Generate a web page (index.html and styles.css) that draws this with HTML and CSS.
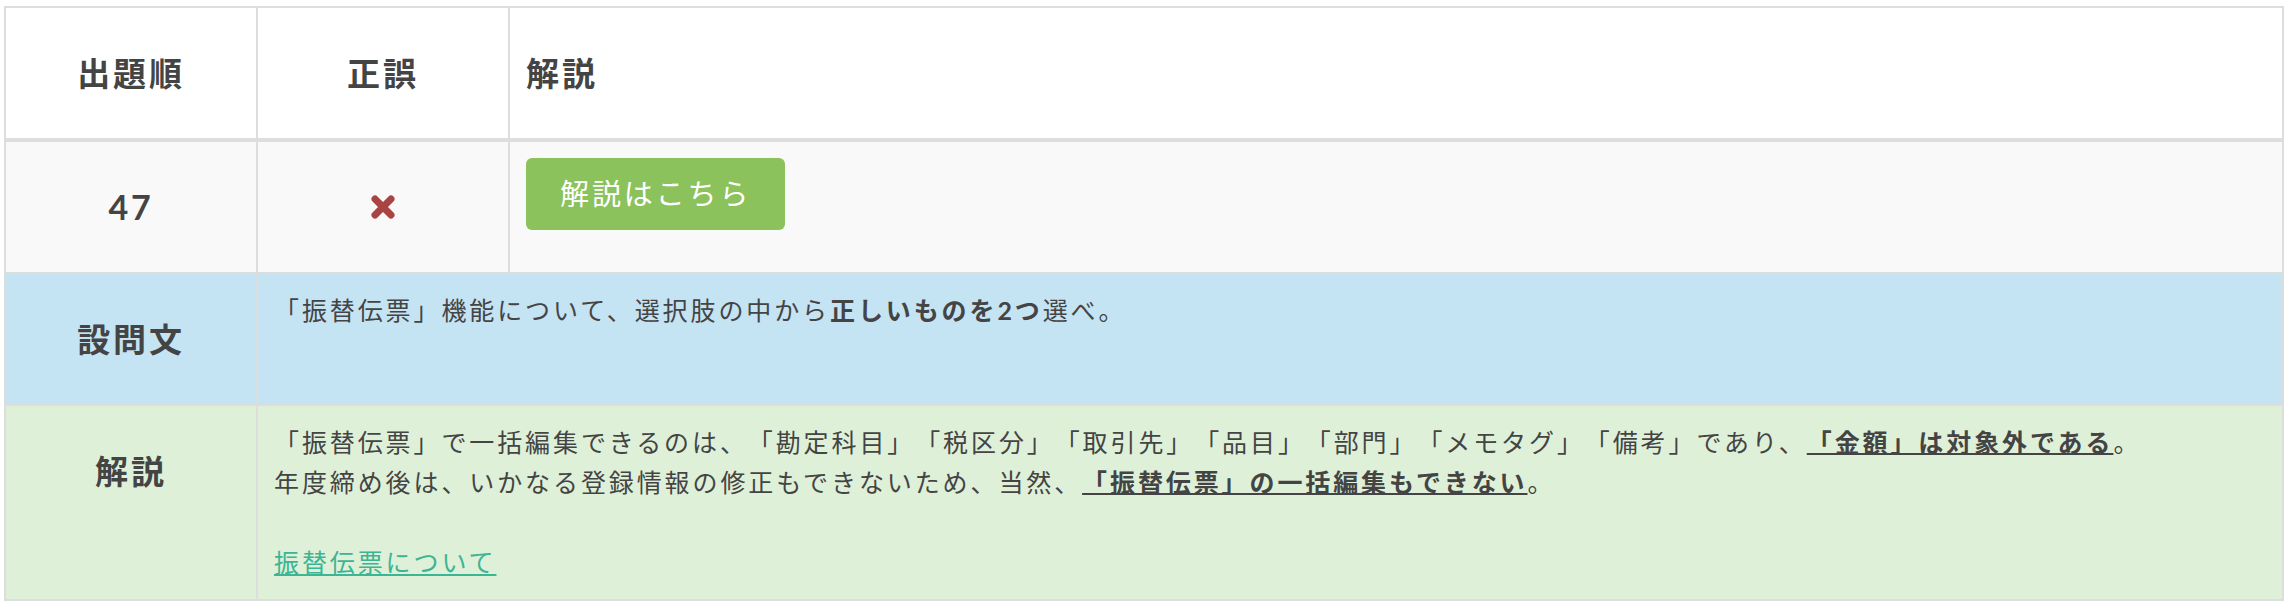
FILE: index.html
```html
<!DOCTYPE html>
<html lang="ja">
  <head>
    <meta charset="UTF-8" />
    <meta name="viewport" content="width=device-width, initial-scale=1.0" />
    <title>解答・解説</title>
    <link rel="stylesheet" href="styles.css">
  </head>
  <body>
    <div class="container">
      <!-- 解答テーブル -->
      <table class="answer-table">
        <colgroup>
          <col class="col-order" />
          <col class="col-result" />
          <col />
        </colgroup>
        <thead>
          <tr>
            <th>出題順</th>
            <th>正誤</th>
            <th class="left">解説</th>
          </tr>
        </thead>
        <tbody>
          <tr class="row-result">
            <td class="num">47</td>
            <td class="center">
              <svg class="mark-wrong" width="24" height="24" viewBox="0 0 24 24">
                <line x1="4" y1="4" x2="20" y2="20" />
                <line x1="20" y1="4" x2="4" y2="20" />
              </svg>
            </td>
            <td class="top">
              <button class="btn-explain">解説はこちら</button>
            </td>
          </tr>
          <!-- 設問文 -->
          <tr class="row-question">
            <th>設問文</th>
            <td colspan="2" class="top">
              「振替伝票」機能について、選択肢の中から<strong>正しいものを2つ</strong>選べ。
            </td>
          </tr>
          <!-- 解説 -->
          <tr class="row-explain">
            <th>解説</th>
            <td colspan="2" class="top">
              「振替伝票」で一括編集できるのは、「勘定科目」「税区分」「取引先」「品目」「部門」「メモタグ」「備考」であり、<strong class="u">「金額」は対象外である</strong>。<br />
              年度締め後は、いかなる登録情報の修正もできないため、当然、<strong class="u">「振替伝票」の一括編集もできない</strong>。<br />
              <br />
              <a href="#">振替伝票について</a>
            </td>
          </tr>
        </tbody>
      </table>
    </div>
  </body>
</html>
```

FILE: styles.css
```css
/* ベーススタイル */
body {
  font-family: Lato, "Noto Sans CJK JP", sans-serif;
  background-color: #fff;
  color: #444;
  margin: 0;
  padding: 0;
}
.container {
  padding: 6px 6px 0 4px;
}
/* テーブル */
.answer-table {
  width: 2280px;
  border-collapse: collapse;
  table-layout: fixed;
  font-size: 25px;
  letter-spacing: 2.9px;
  line-height: 40px;
  text-spacing-trim: space-all;
}
.col-order,
.col-result {
  width: 252px;
}
.answer-table th,
.answer-table td {
  border: 2px solid #ddd;
  padding: 16px;
  vertical-align: middle;
}
.answer-table th {
  font-size: 33px;
  font-weight: bold;
  line-height: 50px;
  padding-top: 40px;
  vertical-align: top;
  text-align: center;
}
.answer-table thead tr {
  height: 133px;
  background-color: #fff;
}
.answer-table thead th {
  border-bottom-width: 4px;
}
.answer-table th.left {
  text-align: left;
}
.answer-table td.top {
  vertical-align: top;
}
.answer-table td.center {
  text-align: center;
}
.answer-table td.num {
  text-align: center;
  font-weight: bold;
  font-size: 34px;
}
.row-result {
  height: 133px;
  background-color: #f9f9f9;
}
.row-question {
  height: 132px;
  background-color: #c4e3f3;
}
.row-explain {
  height: 195px;
  background-color: #dff0d8;
}
/* ×マーク */
.mark-wrong {
  display: block;
  margin: 0 auto;
}
.mark-wrong line {
  stroke: #a94442;
  stroke-width: 7;
  stroke-linecap: round;
}
/* ボタン */
.btn-explain {
  background-color: #8bc25b;
  color: #fff;
  border: none;
  border-radius: 6px;
  font-family: inherit;
  font-size: 29px;
  letter-spacing: 0.1em;
  line-height: 44px;
  padding: 14px 34px;
  cursor: pointer;
}
.u {
  text-decoration: underline;
  text-decoration-thickness: 2px;
}
a {
  color: #3bb593;
}
```
